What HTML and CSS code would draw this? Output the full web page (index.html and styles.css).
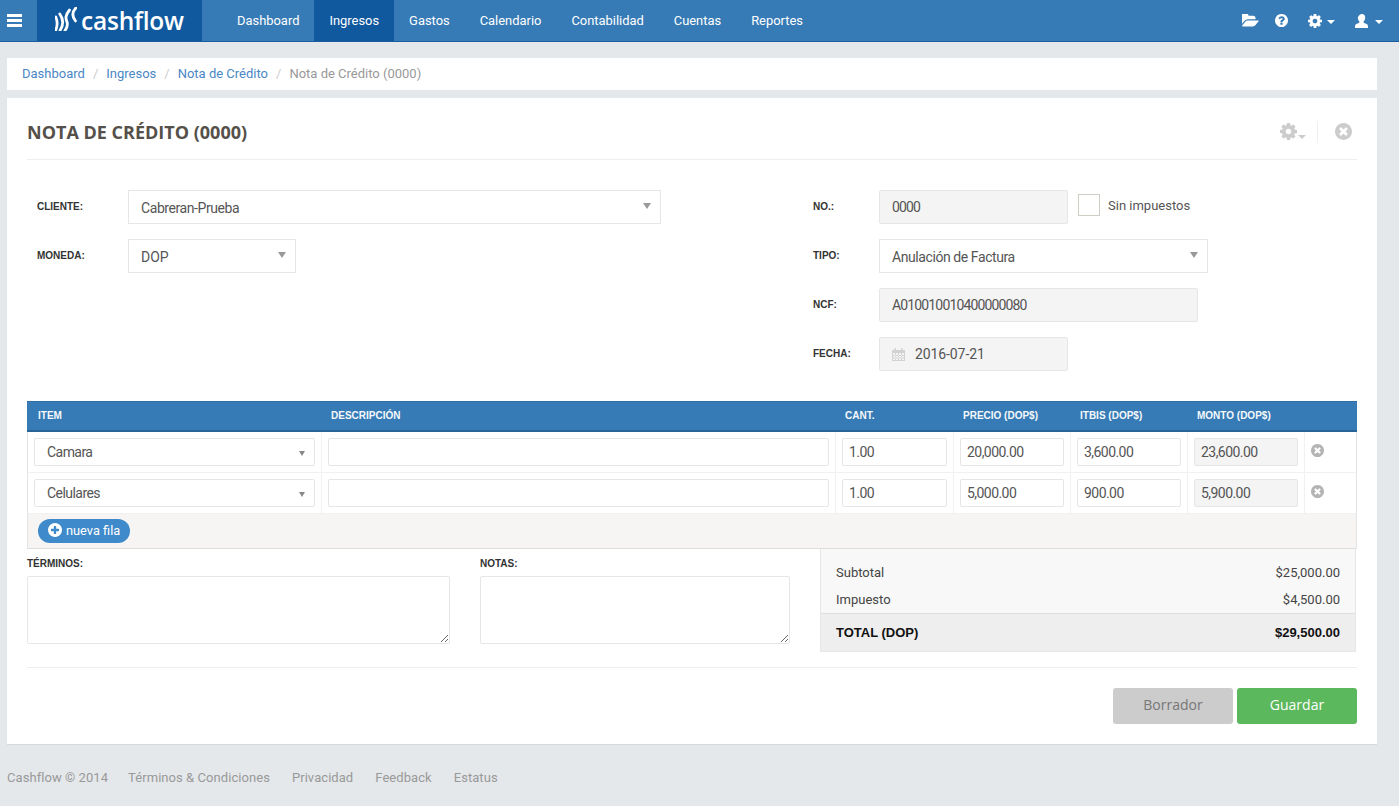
FILE: index.html
```html
<!DOCTYPE html>
<html lang="es">
<head>
<meta charset="utf-8">
<title>Nota de Crédito</title>
<link rel="stylesheet" href="styles.css">
</head>
<body>
<svg class="defs" aria-hidden="true">
  <symbol id="i-cog" viewBox="128 128 1536 1536"><path d="M1152 896q0-106-75-181t-181-75-181 75-75 181 75 181 181 75 181-75 75-181zm512-109v222q0 12-8 23t-20 13l-185 28q-19 54-39 91 35 50 107 138 10 12 10 25t-9 23q-27 37-99 108t-94 71q-12 0-26-9l-138-108q-44 23-91 38-16 136-29 186-7 28-36 28h-222q-14 0-24.5-8.5t-11.5-21.5l-28-184q-49-16-90-37l-141 107q-10 9-25 9-14 0-25-11-126-114-165-168-7-10-7-23 0-12 8-23 15-21 51-66.5t54-70.5q-27-50-41-99l-183-27q-13-2-21-12.5t-8-23.5v-222q0-12 8-23t19-13l186-28q14-46 39-92-40-57-107-138-10-12-10-24 0-10 9-23 26-36 98.5-107.5t94.5-71.5q13 0 26 10l138 107q44-23 91-38 16-136 29-186 7-28 36-28h222q14 0 24.5 8.5t11.5 21.5l28 184q49 16 90 37l142-107q9-9 24-9 13 0 25 10 129 119 165 170 7 8 7 22 0 12-8 23-15 21-51 66.5t-54 70.5q26 50 41 98l183 28q13 2 21 12.5t8 23.5z"/></symbol>
  <symbol id="i-times" viewBox="128 128 1536 1536"><path d="M1277 1122q0-26-19-45l-181-181 181-181q19-19 19-45 0-27-19-46l-90-90q-19-19-46-19-26 0-45 19l-181 181-181-181q-19-19-45-19-27 0-46 19l-90 90q-19 19-19 46 0 26 19 45l181 181-181 181q-19 19-19 45 0 27 19 46l90 90q19 19 46 19 26 0 45-19l181-181 181 181q19 19 45 19 27 0 46-19l90-90q19-19 19-46zm387-226q0 209-103 385.5t-279.5 279.5-385.5 103-385.5-103-279.5-279.5-103-385.5 103-385.5 279.5-279.5 385.5-103 385.5 103 279.5 279.5 103 385.5z"/></symbol>
  <symbol id="i-plus" viewBox="128 128 1536 1536"><path d="M1344 960v-128q0-26-19-45t-45-19h-256v-256q0-26-19-45t-45-19h-128q-26 0-45 19t-19 45v256h-256q-26 0-45 19t-19 45v128q0 26 19 45t45 19h256v256q0 26 19 45t45 19h128q26 0 45-19t19-45v-256h256q26 0 45-19t19-45zm320-64q0 209-103 385.5t-279.5 279.5-385.5 103-385.5-103-279.5-279.5-103-385.5 103-385.5 279.5-279.5 385.5-103 385.5 103 279.5 279.5 103 385.5z"/></symbol>
  <symbol id="i-help" viewBox="128 128 1536 1536"><path d="M1024 1376v-192q0-14-9-23t-23-9h-192q-14 0-23 9t-9 23v192q0 14 9 23t23 9h192q14 0 23-9t9-23zm256-672q0-88-55.5-163t-138.5-116-170-41q-243 0-371 213-15 24 8 42l132 100q7 6 19 6 16 0 25-12 53-68 86-92 34-24 86-24 48 0 85.5 26t37.5 59q0 38-20 61t-68 45q-63 28-115.5 86.5t-52.5 125.5v36q0 14 9 23t23 9h192q14 0 23-9t9-23q0-19 21.5-49.5t54.5-49.5q32-18 49-28.5t46-35 44.5-48 28-60.5 12.5-81zm384 192q0 209-103 385.5t-279.5 279.5-385.5 103-385.5-103-279.5-279.5-103-385.5 103-385.5 279.5-279.5 385.5-103 385.5 103 279.5 279.5 103 385.5z"/></symbol>
  <symbol id="i-folder" viewBox="0 192 1850 1408"><path d="M1815 952q0 31-31 66l-336 396q-43 51-120.5 86.5t-143.5 35.5h-1088q-34 0-60.5-13t-26.5-43q0-31 31-66l336-396q43-51 120.5-86.5t143.5-35.5h1088q34 0 60.5 13t26.5 43zm-343-344v160h-832q-94 0-197 47.5t-164 119.5l-337 396-5 6q0-4-.5-12.5t-.5-12.5v-960q0-92 66-158t158-66h320q92 0 158 66t66 158v32h544q92 0 158 66t66 158z"/></symbol>
  <symbol id="i-user" viewBox="0 0 14 14"><path d="M7 0c2 0 3.200 1.400 3.200 3.400 0 1.600-.7 3.200-1.600 4.100v1.100c.6.700 2 1 3.400 1.700.9.400 1 1.600 1 3.700H0c0-2.100.1-3.300 1-3.700 1.400-.7 2.800-1 3.400-1.700V7.500c-.9-.9-1.600-2.500-1.600-4.100C3.800 1.400 5 0 7 0z"/></symbol>
  <symbol id="i-cal" viewBox="0 0 13 13"><path d="M0 2h2.500V0h1.500v2h5V0h1.500v2H13v11H0zm1 3v7h11V5zm2 0v7h1V5zm3 0v7h1V5zm3 0v7h1V5zM1 7h11v1H1zm0 2.500h11v1H1z" fill-rule="evenodd"/></symbol>
</svg>

<header class="topbar">
  <a class="toggle" href="#"><span class="bars"><i></i><i></i><i></i></span></a>
  <a class="brand" href="#">
    <svg class="brand-mark" viewBox="0 0 22 24"><path d="M.8 10Q3.500 16.500.8 23M4.800 7Q10.500 15 5 23.500M14.500 3C9.500 9 11 12 12 15 13 18 12.500 20 10 23.500M21 .8Q15 7 20.500 14"/></svg>
    <span class="brand-name">cashflow</span>
  </a>
  <nav class="mainnav">
    <a href="#">Dashboard</a>
    <a class="active" href="#">Ingresos</a>
    <a href="#">Gastos</a>
    <a href="#">Calendario</a>
    <a href="#">Contabilidad</a>
    <a href="#">Cuentas</a>
    <a href="#">Reportes</a>
  </nav>
  <div class="tools">
    <svg class="ic ic-folder"><use href="#i-folder"/></svg>
    <svg class="ic ic-help"><use href="#i-help"/></svg>
    <span class="tool tool-gear"><svg class="ic ic-gear"><use href="#i-cog"/></svg><b class="caret"></b></span>
    <span class="tool"><svg class="ic ic-user"><use href="#i-user"/></svg><b class="caret"></b></span>
  </div>
</header>

<ol class="crumbs">
  <li><a href="#">Dashboard</a></li>
  <li><a href="#">Ingresos</a></li>
  <li><a href="#">Nota de Crédito</a></li>
  <li class="current">Nota de Crédito (0000)</li>
</ol>

<main class="panel">
  <div class="panel-head">
    <h1>NOTA DE CRÉDITO (0000)</h1>
    <div class="panel-tools">
      <span class="head-gear"><svg class="ic ic-headgear"><use href="#i-cog"/></svg><b class="caret caret-grey"></b></span>
      <svg class="ic ic-headclose"><use href="#i-times"/></svg>
    </div>
  </div>

  <div class="form">
    <div class="col-left">
      <div class="row">
        <label>CLIENTE:</label>
        <div class="field select w-client">Cabreran-Prueba</div>
      </div>
      <div class="row">
        <label>MONEDA:</label>
        <div class="field select w-coin">DOP</div>
      </div>
    </div>
    <div class="col-right">
      <div class="row">
        <label>NO.:</label>
        <div class="field off w-short digits">0000</div>
        <span class="check"></span>
        <span class="check-label">Sin impuestos</span>
      </div>
      <div class="row">
        <label>TIPO:</label>
        <div class="field select w-type">Anulación de Factura</div>
      </div>
      <div class="row">
        <label>NCF:</label>
        <div class="field off w-ncf digits">A010010010400000080</div>
      </div>
      <div class="row">
        <label>FECHA:</label>
        <div class="field off w-short date"><svg class="ic ic-cal"><use href="#i-cal"/></svg>2016-07-21</div>
      </div>
    </div>
  </div>

  <table class="items">
    <thead>
      <tr>
        <th class="c-item">ITEM</th>
        <th class="c-desc">DESCRIPCIÓN</th>
        <th class="c-qty">CANT.</th>
        <th class="c-price">PRECIO (DOP$)</th>
        <th class="c-tax">ITBIS (DOP$)</th>
        <th class="c-sum">MONTO (DOP$)</th>
        <th class="c-del"></th>
      </tr>
    </thead>
    <tbody>
      <tr>
        <td><div class="cell select cell-item">Camara</div></td>
        <td><div class="cell"></div></td>
        <td><div class="cell">1.00</div></td>
        <td><div class="cell">20,000.00</div></td>
        <td><div class="cell">3,600.00</div></td>
        <td><div class="cell off">23,600.00</div></td>
        <td class="del"><svg class="ic ic-del"><use href="#i-times"/></svg></td>
      </tr>
      <tr>
        <td><div class="cell select cell-item">Celulares</div></td>
        <td><div class="cell"></div></td>
        <td><div class="cell">1.00</div></td>
        <td><div class="cell">5,000.00</div></td>
        <td><div class="cell">900.00</div></td>
        <td><div class="cell off">5,900.00</div></td>
        <td class="del"><svg class="ic ic-del"><use href="#i-times"/></svg></td>
      </tr>
    </tbody>
    <tfoot>
      <tr>
        <td colspan="7"><a class="add-row" href="#"><svg class="ic ic-plus"><use href="#i-plus"/></svg>nueva fila</a></td>
      </tr>
    </tfoot>
  </table>

  <div class="bottom">
    <div class="note note-terms">
      <label>TÉRMINOS:</label>
      <textarea></textarea>
    </div>
    <div class="note note-notes">
      <label>NOTAS:</label>
      <textarea></textarea>
    </div>
    <div class="totals">
      <div class="totals-lines">
        <div class="line"><span>Subtotal</span><span>$25,000.00</span></div>
        <div class="line"><span>Impuesto</span><span>$4,500.00</span></div>
      </div>
      <div class="line total"><span>TOTAL (DOP)</span><span>$29,500.00</span></div>
    </div>
  </div>

  <div class="actions">
    <a class="btn btn-draft" href="#">Borrador</a>
    <a class="btn btn-save" href="#">Guardar</a>
  </div>
</main>

<footer class="foot">
  <span>Cashflow © 2014</span>
  <a href="#">Términos &amp; Condiciones</a>
  <a href="#">Privacidad</a>
  <a href="#">Feedback</a>
  <a href="#">Estatus</a>
</footer>
</body>
</html>
```
FILE: styles.css
```css
* { box-sizing: border-box; }
html, body { height: 100%; }
body {
  margin: 0;
  background: #e4e8eb;
  font-family: Roboto, "Liberation Sans", sans-serif;
  font-size: 14px;
  color: #555;
  overflow: hidden;
}
a { text-decoration: none; color: inherit; }
.defs { position: absolute; width: 0; height: 0; }
.ic { display: block; fill: currentColor; }

/* top bar */
.topbar {
  display: flex;
  height: 42px;
  background: #377bb6;
  border-bottom: 1px solid #1a5c9c;
  color: #fff;
}
.toggle { width: 37px; display: flex; align-items: center; padding-left: 7px; }
.bars { display: flex; flex-direction: column; gap: 2px; width: 15px; }
.bars i { display: block; height: 3px; background: #fff; }
.brand {
  width: 165px;
  background: #11599f;
  display: flex;
  align-items: center;
  padding-left: 18px;
  gap: 4px;
}
.brand-mark {
  width: 22px; height: 24px;
  margin-top: -3px;
  fill: none;
  stroke: #fff;
  stroke-width: 2.800;
  stroke-linecap: round;
}
.brand-name {
  font-family: "Open Sans", sans-serif;
  font-size: 24.500px;
  font-weight: 600;
  letter-spacing: -.2px;
  line-height: 41px;
}
.mainnav { display: flex; margin-left: 20px; }
.mainnav a {
  display: block;
  padding: 0 15px;
  line-height: 41px;
  font-size: 12.920px;
  font-weight: 400;
  color: #fff;
}
.mainnav .active { background: #11599f; color: #fff; }
.tools { margin-left: auto; display: flex; align-items: center; padding-right: 16px; }
.tool { display: flex; align-items: center; }
.ic-folder { width: 17px; height: 13px; margin-right: 16px; }
.ic-help { width: 13px; height: 13px; margin-right: 20px; }
.ic-gear { width: 14px; height: 14px; }
.ic-user { width: 14px; height: 14px; }
.tool-gear { margin-right: 20px; }
.caret {
  display: block;
  width: 0; height: 0;
  margin: 3px 0 0 5px;
  border-left: 4px solid transparent;
  border-right: 4px solid transparent;
  border-top: 4px solid #fff;
}
.tool-gear + .tool .caret { margin-left: 6px; }

/* breadcrumb */
.crumbs {
  display: flex;
  list-style: none;
  height: 32px;
  margin: 16px 22px 8px 7px;
  padding: 0 15px;
  background: #fff;
  font-size: 13px;
  line-height: 31px;
  color: #4a87c5;
}
.crumbs li + li::before { content: "/"; color: #ccc; padding: 0 8px; }
.crumbs .current { color: #999; }

/* panel */
.panel {
  height: 646px;
  margin: 0 22px 0 7px;
  padding: 0 20px;
  background: #fff;
  box-shadow: 0 1px 1px rgba(0, 0, 0, .06);
}
.panel-head {
  display: flex;
  align-items: center;
  justify-content: space-between;
  height: 62px;
  border-bottom: 1px solid #eee;
  padding-top: 7px;
}
.panel-head h1 {
  margin: 0;
  font-family: "Open Sans", sans-serif;
  font-size: 18px;
  font-weight: 700;
  color: #555049;
}
.panel-tools { display: flex; align-items: center; padding-right: 5px; color: #ccc; height: 22px; }
.head-gear { display: flex; align-items: flex-end; padding-right: 11px; border-right: 1px solid #eee; height: 22px; padding-bottom: 3px; }
.ic-headgear { width: 17px; height: 17px; }
.caret-grey { margin: 0 0 1px 1px; border-top-color: #ccc; }
.ic-headclose { width: 17px; height: 17px; margin: -2px 0 0 17px; }

/* form */
.form { display: flex; padding-top: 30px; height: 241px; }
.col-left { width: 786px; padding-left: 10px; }
.col-right { flex: 1; }
.row { display: flex; align-items: center; height: 34px; margin-bottom: 15px; }
.row label, .note label {
  font-family: "Liberation Sans", Arial, sans-serif;
  font-size: 10px;
  font-weight: 700;
  color: #333;
}
.row label { width: 91px; margin-top: -2px; }
.col-right .row label { width: 66px; }
.field {
  position: relative;
  display: flex;
  align-items: center;
  height: 34px;
  padding: 2px 12px 0;
  border: 1px solid #e6e6e6;
  background: #fff;
  font-size: 14px;
  letter-spacing: -.42px;
  color: #555;
}
.off { background: #f4f4f4; }
.field.off { border-radius: 2px; padding-top: 0; }
.digits { letter-spacing: -.85px; }
.date { letter-spacing: -.1px; }
.w-client { width: 533px; }
.w-coin { width: 168px; letter-spacing: 0; }
.w-short { width: 189px; }
.w-type { width: 329px; }
.w-ncf { width: 319px; }
.select::after {
  content: "";
  position: absolute;
  right: 9px;
  top: 12px;
  border-left: 4px solid transparent;
  border-right: 4px solid transparent;
  border-top: 6px solid #999;
}
.check { width: 22px; height: 22px; margin: -4px 8px 0 10px; border: 1px solid #d0ccc6; background: #fff; }
.check-label { font-size: 13px; margin-top: -4px; color: #555; }
.ic-cal { width: 13px; height: 13px; margin-right: 10px; color: #d2d2d2; }

/* items table */
.items {
  width: 100%;
  border-collapse: separate;
  border-spacing: 0;
  table-layout: fixed;
}
.items th {
  height: 31px;
  padding: 0 0 1px 9px;
  background: #377bb6;
  border-top: 1px solid #2f6ea5;
  border-bottom: 2px solid #2a6496;
  color: #f4f8fb;
  font-family: "Liberation Sans", Arial, sans-serif;
  font-size: 10px;
  font-weight: 700;
  text-align: left;
}
.items th.c-item { padding-left: 11px; }
.c-item { width: 295px; }
.c-desc { width: 514px; }
.c-qty { width: 118px; }
.c-price { width: 117px; }
.c-tax { width: 117px; }
.c-sum { width: 117px; }
.items td {
  height: 41px;
  padding: 0 6px;
  border-right: 1px solid #f1f1f1;
  border-bottom: 1px solid #f1f1f1;
}
.items tbody td:first-child { border-left: 1px solid #e4e4e4; }
.items tbody td:last-child { border-right: 1px solid #e4e4e4; }
.cell {
  position: relative;
  height: 28px;
  padding: 0 6px;
  border: 1px solid #e6e6e6;
  border-radius: 2px;
  background: #fff;
  font-size: 14px;
  letter-spacing: -.55px;
  line-height: 27px;
  color: #555;
}
.cell.off { background: #f4f4f4; }
.cell-item { padding-left: 12px; }
.cell-item::after {
  top: 12px;
  right: 9px;
  border-left-width: 3.500px;
  border-right-width: 3.500px;
  border-top-width: 5.500px;
  border-top-color: #888;
}
.del { vertical-align: top; }
.ic-del { width: 13px; height: 13px; margin: 12px 0 0 0; color: #b4b4b4; }
.items tfoot td {
  height: 35px;
  padding: 0 0 0 10px;
  background: #f6f5f3;
  border: 0;
  border-left: 1px solid #e4e4e4;
  border-right: 1px solid #e4e4e4;
  border-bottom: 1px solid #dededc;
}
.add-row {
  display: inline-flex;
  align-items: center;
  height: 24px;
  padding: 0 10px 1px;
  border-radius: 12px;
  background: #3e8acb;
  color: #fff;
  font-size: 12.800px;
  vertical-align: middle;
}
.ic-plus { width: 14px; height: 14px; margin: -1px 4px 0 0; }

/* bottom */
.bottom { display: flex; height: 103px; }
.note { padding-top: 9px; }
.note label { display: block; height: 18px; line-height: 12px; }
.note textarea {
  display: block;
  width: 100%;
  height: 68px;
  border: 1px solid #e6e6e6;
  border-radius: 2px;
  background: #fff;
  outline: 0;
}
.note-terms { width: 423px; margin-right: 30px; }
.note-notes { width: 310px; margin-right: 30px; }
.totals {
  width: 536px;
  height: 103px;
  background: #f8f8f8;
  border: 1px solid #e6e6e6;
  border-top: 0;
  font-size: 13px;
  color: #444;
}
.totals-lines { height: 65px; padding-top: 11px; border-bottom: 1px solid #dedede; }
.line { display: flex; justify-content: space-between; height: 27px; line-height: 26px; padding: 0 15px; }
.total {
  height: 37px;
  line-height: 37px;
  background: #eee;
  color: #111;
  font-family: "Liberation Sans", Arial, sans-serif;
  font-weight: 700;
  font-size: 13px;
}

/* actions */
.actions {
  display: flex;
  justify-content: flex-end;
  gap: 4px;
  margin-top: 15px;
  padding-top: 20px;
  border-top: 1px solid #eee;
}
.btn {
  display: block;
  width: 120px;
  height: 36px;
  border-radius: 3px;
  font-family: "Open Sans", sans-serif;
  font-size: 14px;
  line-height: 34px;
  text-align: center;
}
.btn-draft { background: #ccc; color: #777; }
.btn-save { background: #5cb85c; color: #fff; }

/* footer */
.foot {
  display: flex;
  gap: 22px;
  padding: 26px 0 0 7px;
  font-size: 13px;
  line-height: 16px;
  letter-spacing: .06px;
  color: #999;
}
.foot span { margin-right: -2px; }
```
